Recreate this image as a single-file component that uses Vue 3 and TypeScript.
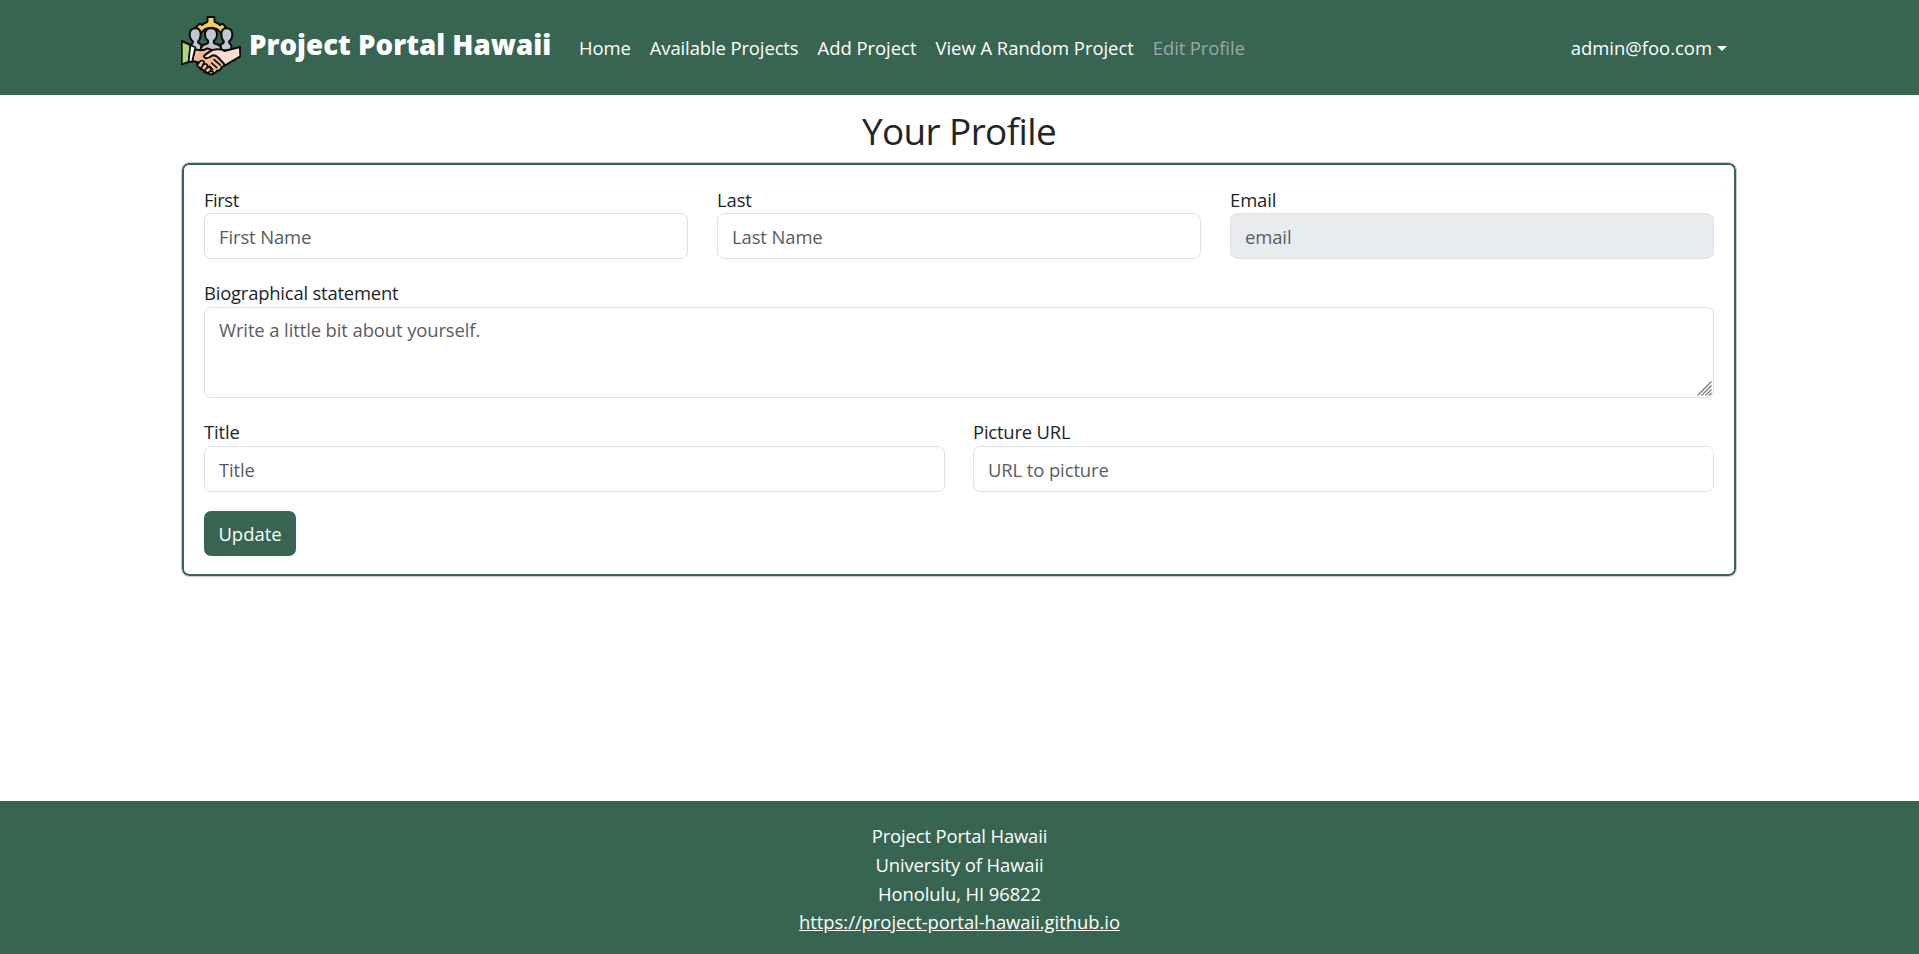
<script setup lang="ts">
interface NavItem {
  label: string
  cls?: string
}

const navItems: NavItem[] = [
  { label: 'Home', cls: 'home' },
  { label: 'Available Projects' },
  { label: 'Add Project', cls: 'add' },
  { label: 'View A Random Project', cls: 'random' },
  { label: 'Edit Profile', cls: 'active' },
]
</script>

<template>
  <div class="page">
    <header class="navbar">
      <div class="container nav-row">
        <a class="brand">
          <svg class="logo" viewBox="33 33 180 180" aria-hidden="true">
            <g stroke="#0b0b0b" stroke-width="6" stroke-linejoin="round" stroke-linecap="round">
              <path fill="#f7ce5c" d="M80 77 L85 72 L78 66 L89 56 L96 60 Q104 53 112 51 L113 36 H133 L134 51 Q143 53 150 60 L158 56 L168 67 L161 72 L166 79 L154 86 Q143 68 123 68 Q103 68 92 86 Z" />
              <path fill="#c3c6d2" d="M62 120 Q69 116 69 110 Q59 103 59 88 Q60 70 76 70 Q92 70 92 88 Q92 103 84 110 Q85 116 94 119 V136 H62 Z" />
              <path fill="#c3c6d2" d="M184 120 Q177 116 177 110 Q187 103 187 88 Q186 70 170 70 Q154 70 154 88 Q154 103 162 110 Q161 116 152 119 V136 H184 Z" />
              <path fill="#c3c6d2" d="M91 140 Q92 118 111 116 Q116 114 114 107 Q105 101 105 87 Q106 70 123 70 Q140 70 141 87 Q141 101 132 107 Q130 114 135 116 Q154 118 156 140 Z" />
              <path fill="#efbc91" d="M75 133 Q100 140 112 130 L141 141 L163 174 Q164 185 155 186 Q152 198 141 197 Q138 204 129 207 Q119 210 112 203 Q101 203 100 194 Q89 194 88 184 Q79 181 82 171 L66 168 Z" />
              <path fill="#f8dfcd" d="M210 126 L163 138 Q157 133 145 133 Q128 132 119 140 L103 151 Q100 157 108 160 Q117 160 128 151 Q138 151 144 157 L157 171 Q164 176 164 182 L211 154 Z" />
              <path fill="#efbc91" stroke-width="5" d="M82 180 L90 169 Q96 164 101 169 Q104 173 99 179 Q107 174 112 180 Q114 184 111 188 Q119 184 123 191 Q125 195 121 199 Q130 198 130 204 Q127 209 119 208 L84 184 Z" />
              <path fill="none" stroke-width="5" d="M92 191 L100 179 M102 199 L112 187 M113 205 L121 198 M125 174 L140 188 M132 164 L151 180 M118 183 L128 194" />
              <path fill="#a8d977" d="M35 108 L62 120 L56 171 L35 178 Z" />
              <path fill="#ffffff" stroke-width="5" d="M61 121 L76 127 L66 171 L56 169 Z" />
            </g>
          </svg>
          <span class="brand-name">Project Portal Hawaii</span>
        </a>
        <nav class="links">
          <a v-for="item in navItems" :key="item.label" class="link" :class="item.cls">{{ item.label }}</a>
        </nav>
        <a class="account"><span>admin@foo.com</span><i class="caret"></i></a>
      </div>
    </header>

    <main class="container main">
      <h2 class="title">Your Profile</h2>
      <form class="card" @submit.prevent>
        <div class="row first">
          <label class="field">
            <span class="tight">First</span>
            <input type="text" placeholder="First Name" />
          </label>
          <label class="field">
            <span>Last</span>
            <input type="text" placeholder="Last Name" />
          </label>
          <label class="field">
            <span>Email</span>
            <input type="text" placeholder="email" disabled />
          </label>
        </div>
        <div class="row">
          <label class="field bio">
            <span class="bio-label">Biographical statement</span>
            <textarea placeholder="Write a little bit about yourself."></textarea>
            <svg class="grip" viewBox="0 0 15 15" aria-hidden="true">
              <path d="M0.5 14.5 L14.5 0.5 M4.5 14.5 L14.5 4.5 M8.5 14.5 L14.5 8.5 M12 14.5 L14.5 12" />
            </svg>
          </label>
        </div>
        <div class="row last">
          <label class="field">
            <span>Title</span>
            <input type="text" placeholder="Title" />
          </label>
          <label class="field">
            <span class="url-label">Picture URL</span>
            <input type="text" placeholder="URL to picture" />
          </label>
        </div>
        <button class="update" type="submit">Update</button>
      </form>
    </main>

    <footer class="footer">
      <div class="portal">Project Portal Hawaii</div>
      <div>University of Hawaii</div>
      <div>Honolulu, HI 96822</div>
      <a class="site">https://project-portal-hawaii.github.io</a>
    </footer>
  </div>
</template>

<style>
body {
  margin: 0;
  background: #fff;
}
</style>

<style scoped>
.page,
.page * {
  box-sizing: border-box;
}
.page {
  display: flex;
  flex-direction: column;
  height: 954px;
  overflow: hidden;
  font-family: "Open Sans", "Noto Sans", sans-serif;
  font-size: 18.43px;
  line-height: 28.8px;
  letter-spacing: -0.1px;
  color: #212529;
}
.container {
  width: 1556px;
  margin-left: 181px;
}
.navbar {
  flex: none;
  height: 95px;
  background: #386551;
  color: #fff;
}
.nav-row {
  display: flex;
  align-items: flex-start;
}
.brand {
  display: flex;
  width: 389px;
  padding-top: 16px;
}
.logo {
  flex: none;
  width: 60px;
  height: 60px;
}
.brand-name {
  margin: 7px 0 0 8px;
  font-size: 27.65px;
  font-weight: 800;
  line-height: 43px;
  letter-spacing: 0.02px;
  white-space: nowrap;
}
.links {
  display: flex;
  gap: 19.1px;
  padding: 34px 0 0 9px;
  white-space: nowrap;
}
.link.home {
  letter-spacing: -0.1px;
}
.link.add,
.link.random {
  letter-spacing: -0.02px;
}
.link.active {
  color: #9ba8ab;
}
.account {
  display: flex;
  align-items: center;
  margin: 34px 10px 0 auto;
  letter-spacing: 0;
}
.caret {
  margin-left: 5px;
  border: 5px solid transparent;
  border-top-color: #fff;
  border-bottom: 0;
}
.main {
  flex: 1;
}
.title {
  margin: 13px 0 8px;
  font-size: 36.9px;
  font-weight: 400;
  line-height: 46px;
  letter-spacing: -0.59px;
  text-align: center;
}
.card {
  height: 415px;
  padding: 19px 20px;
  border: 1px solid #c9cfcc;
  border-radius: 8px;
  box-shadow: inset 0 0 0 2px #386551;
}
.row {
  display: flex;
  gap: 29px;
  margin: 0 2px 20px;
}
.row.first {
  margin-top: 3px;
}
.row.last {
  gap: 28px;
  margin-bottom: 19px;
}
.field {
  position: relative;
  display: flex;
  flex: 1;
  flex-direction: column;
}
.field > span {
  height: 28px;
}
.first .field > span {
  padding-top: 1px;
}
.field > .tight {
  letter-spacing: -0.45px;
}
.field > .bio-label,
.field > .url-label {
  letter-spacing: -0.2px;
}
input,
textarea {
  display: block;
  width: 100%;
  height: 46px;
  margin: 0;
  padding: 7px 14px;
  border: 1px solid #dee2e6;
  border-radius: 7px;
  outline: 0;
  background: #fff;
  font: inherit;
  letter-spacing: inherit;
}
input::placeholder,
textarea::placeholder {
  color: #595c5f;
  opacity: 1;
}
input:disabled {
  background: #e9ecef;
}
textarea {
  height: 91px;
  padding-top: 8px;
  overflow: hidden;
  resize: none;
}
.grip {
  position: absolute;
  right: 2px;
  bottom: 2px;
  width: 15px;
  height: 15px;
  fill: none;
  stroke: #777;
  stroke-width: 1.2;
}
.update {
  display: block;
  width: 92px;
  height: 45px;
  margin-left: 2px;
  padding: 1px 0 0;
  border: 0;
  border-radius: 7px;
  background: #386551;
  color: #fff;
  font: inherit;
  letter-spacing: 0;
}
.footer {
  flex: none;
  height: 153px;
  padding-top: 21px;
  background: #386551;
  color: #fff;
  text-align: center;
}
.portal {
  letter-spacing: -0.14px;
}
.site {
  display: block;
  letter-spacing: -0.03px;
  text-decoration: underline;
}
</style>
